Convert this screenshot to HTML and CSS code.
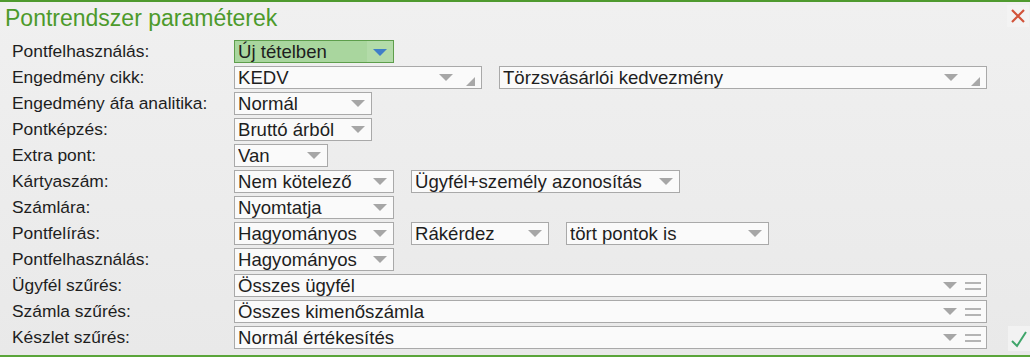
FILE: index.html
```html
<!DOCTYPE html>
<html lang="hu">

<head>
    <meta charset="UTF-8">
    <meta name="viewport" content="width=device-width, initial-scale=1.0">
    <title>Pontrendszer paraméterek</title>
    <link rel="stylesheet" href="styles.css">
</head>

<body>
    <div class="dialog">
        <div class="header">
            <h1 class="title">Pontrendszer paraméterek</h1>
            <button class="close" title="Bezárás">
                <svg width="16" height="16" viewBox="0 0 16 16">
                    <path d="M2 2 L14 14 M14 2 L2 14" stroke="#d2533a" stroke-width="2.2" fill="none"/>
                </svg>
            </button>
        </div>

        <div class="form">
            <div class="row">
                <div class="label">Pontfelhasználás:</div>
                <div class="field green w160"><span class="val">Új tételben</span><span class="arrow blue"></span></div>
            </div>
            <div class="row">
                <div class="label">Engedmény cikk:</div>
                <div class="field w248"><span class="val">KEDV</span><span class="arrow"></span><span class="grip"></span></div>
                <div class="field w488"><span class="val">Törzsvásárlói kedvezmény</span><span class="arrow"></span><span class="grip"></span></div>
            </div>
            <div class="row">
                <div class="label">Engedmény áfa analitika:</div>
                <div class="field w138"><span class="val">Normál</span><span class="arrow"></span></div>
            </div>
            <div class="row">
                <div class="label">Pontképzés:</div>
                <div class="field w138"><span class="val">Bruttó árból</span><span class="arrow"></span></div>
            </div>
            <div class="row">
                <div class="label">Extra pont:</div>
                <div class="field w94"><span class="val">Van</span><span class="arrow"></span></div>
            </div>
            <div class="row">
                <div class="label">Kártyaszám:</div>
                <div class="field w160"><span class="val">Nem kötelező</span><span class="arrow"></span></div>
                <div class="field w269"><span class="val">Ügyfél+személy azonosítás</span><span class="arrow"></span></div>
            </div>
            <div class="row">
                <div class="label">Számlára:</div>
                <div class="field w160"><span class="val">Nyomtatja</span><span class="arrow"></span></div>
            </div>
            <div class="row">
                <div class="label">Pontfelírás:</div>
                <div class="field w160"><span class="val">Hagyományos</span><span class="arrow"></span></div>
                <div class="field w138"><span class="val">Rákérdez</span><span class="arrow"></span></div>
                <div class="field w203"><span class="val">tört pontok is</span><span class="arrow"></span></div>
            </div>
            <div class="row">
                <div class="label">Pontfelhasználás:</div>
                <div class="field w160"><span class="val">Hagyományos</span><span class="arrow"></span></div>
            </div>
            <div class="row">
                <div class="label">Ügyfél szűrés:</div>
                <div class="field wide"><span class="val">Összes ügyfél</span><span class="arrow"></span><span class="lines"></span></div>
            </div>
            <div class="row">
                <div class="label">Számla szűrés:</div>
                <div class="field wide"><span class="val">Összes kimenőszámla</span><span class="arrow"></span><span class="lines"></span></div>
            </div>
            <div class="row">
                <div class="label">Készlet szűrés:</div>
                <div class="field wide"><span class="val">Normál értékesítés</span><span class="arrow"></span><span class="lines"></span></div>
                <button class="ok" title="OK">
                    <svg width="18" height="18" viewBox="0 0 18 18">
                        <path d="M2 11 L7 16 L16 2" stroke="#3fa56a" stroke-width="2" fill="none"/>
                    </svg>
                </button>
            </div>
        </div>
    </div>
</body>

</html>
```

FILE: styles.css
```css
* {
    margin: 0;
    padding: 0;
    box-sizing: border-box;
}

body {
    width: 1030px;
    height: 357px;
    overflow: hidden;
    background: #ececec;
    font-family: "Liberation Sans", Arial, sans-serif;
    color: #1e1e1e;
}

.dialog {
    height: 357px;
    border-top: 2px solid #4f9a2f;
    border-bottom: 2px solid #5aa53a;
    background: linear-gradient(#f0f0f0, #e9e9e9);
}

.header {
    display: flex;
    justify-content: space-between;
    align-items: flex-start;
    height: 38px;
}

.title {
    font-size: 23px;
    font-weight: normal;
    color: #4c9a2b;
    padding: 3px 0 0 5px;
    line-height: 26px;
}

.close {
    width: 22px;
    height: 22px;
    margin: 3px 1px 0 0;
    border: none;
    background: #f3f3f3;
    display: flex;
    align-items: center;
    justify-content: center;
}

.form {
    display: flex;
    flex-direction: column;
    gap: 3px;
    padding-left: 12px;
}

.row {
    display: flex;
    align-items: center;
    height: 23px;
    position: relative;
}

.label {
    width: 222px;
    font-size: 17.4px;
    line-height: 23px;
}

.field {
    display: flex;
    align-items: center;
    height: 23px;
    margin-right: 17px;
    padding: 0 6px 0 3px;
    border: 1px solid #a9a9a9;
    background: #fafafa;
}

.val {
    flex: 1;
    font-size: 18.6px;
    line-height: 21px;
    white-space: nowrap;
    overflow: hidden;
}

.green {
    background: #a9d69e;
    border-color: #5e9e4c;
    padding-right: 0;
}

.green .arrow {
    width: 26px;
    height: 21px;
    border: none;
    background: #b3dba9;
    position: relative;
}

.green .arrow::after {
    content: "";
    position: absolute;
    left: 6px;
    top: 8px;
    border-left: 7px solid transparent;
    border-right: 7px solid transparent;
    border-top: 7px solid #3f7fc8;
}

.arrow {
    width: 0;
    height: 0;
    border-left: 7px solid transparent;
    border-right: 7px solid transparent;
    border-top: 7px solid #a6a6a6;
}

.grip {
    width: 0;
    height: 0;
    margin: 8px 0 0 13px;
    border-left: 9px solid transparent;
    border-bottom: 9px solid #a8a8a8;
}

.lines {
    width: 16px;
    height: 8px;
    margin-left: 8px;
    margin-right: -1px;
    border-top: 2px solid #b4b4b4;
    border-bottom: 2px solid #b4b4b4;
}

.w94 { width: 94px; }
.w138 { width: 138px; }
.w160 { width: 160px; }
.w203 { width: 203px; }
.w248 { width: 248px; }
.w269 { width: 269px; }
.w488 { width: 488px; }
.wide { width: 753px; }

.ok {
    position: absolute;
    right: 0;
    top: 0;
    width: 22px;
    height: 25px;
    border: none;
    background: #f2f2f2;
    display: flex;
    align-items: center;
    justify-content: center;
}
```
